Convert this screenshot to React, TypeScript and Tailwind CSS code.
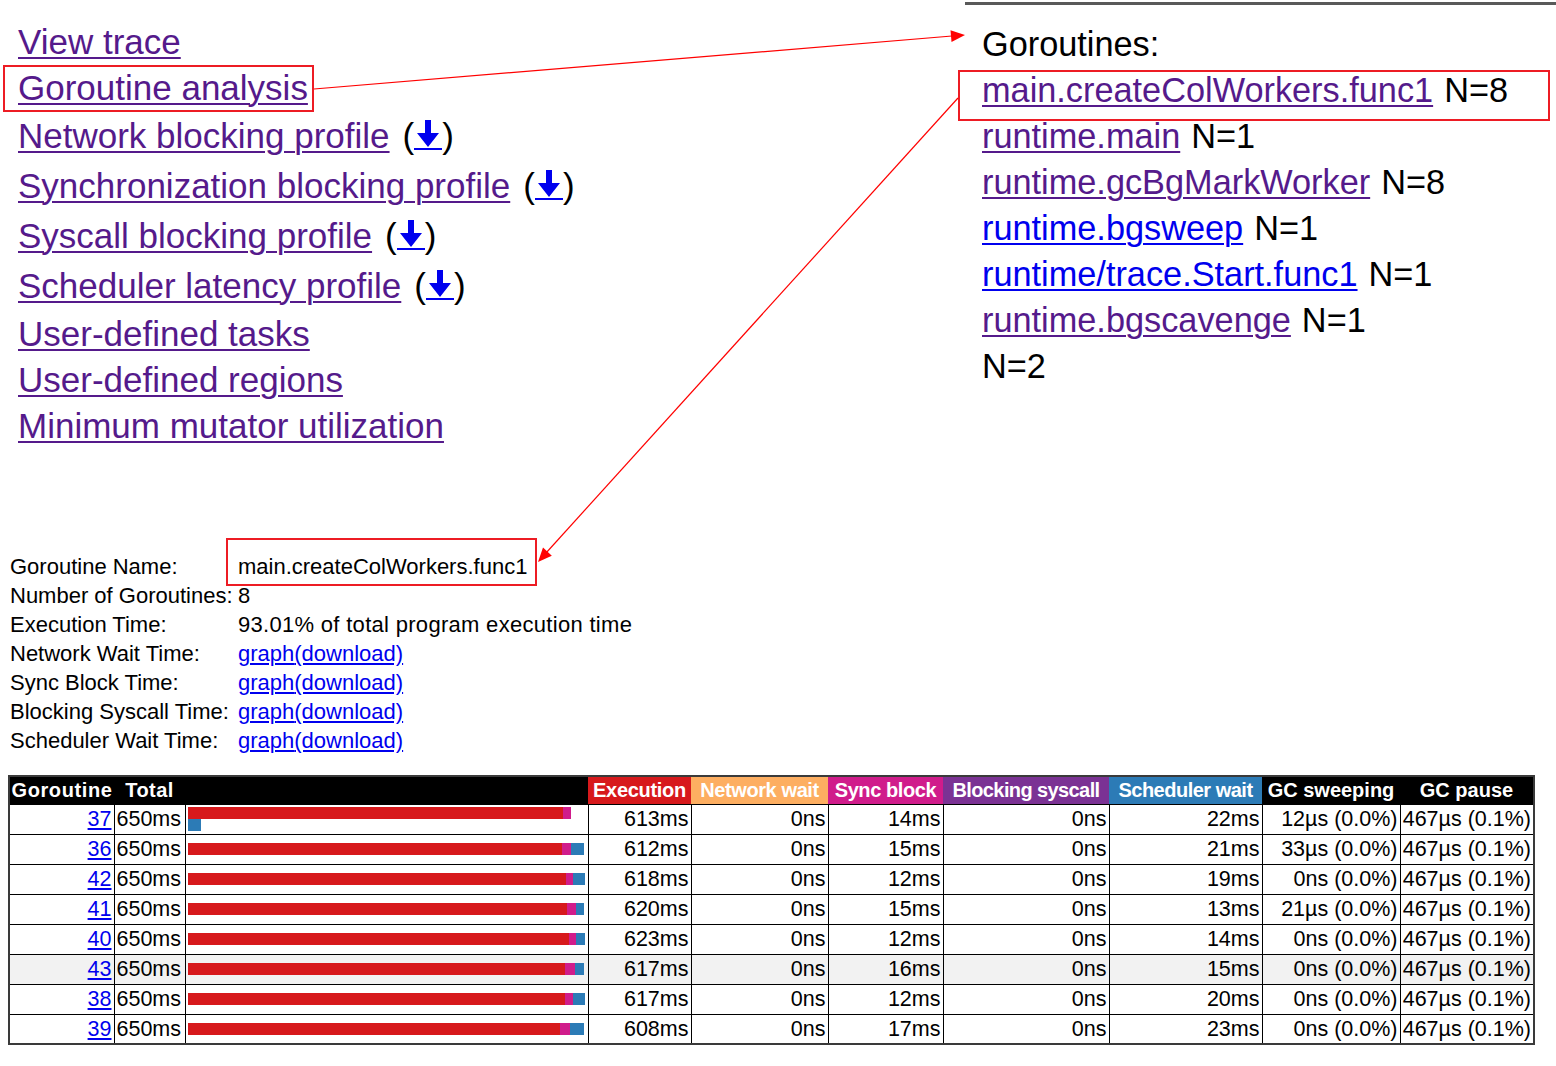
import React from 'react'

const purple = 'text-[#551a8b]'
const blue = 'text-[#0000ee]'

const Download = () => (
  <span className="ml-[13px] inline-flex items-baseline text-black">
    (
    <a href="#" className="inline-flex border-b-2 border-[#0000ee]">
      <svg width="28" height="28" viewBox="0 0 28 28">
        <path d="M11 0h6v13h8L14 27 3 13h8z" fill="#0000ee" />
      </svg>
    </a>
    )
  </span>
)

const links = [
  { label: 'View trace', dl: false },
  { label: 'Goroutine analysis', dl: false },
  { label: 'Network blocking profile', dl: true },
  { label: 'Synchronization blocking profile', dl: true },
  { label: 'Syscall blocking profile', dl: true },
  { label: 'Scheduler latency profile', dl: true },
  { label: 'User-defined tasks', dl: false },
  { label: 'User-defined regions', dl: false },
  { label: 'Minimum mutator utilization', dl: false },
]

const goroutines = [
  { name: 'main.createColWorkers.func1', n: 'N=8', visited: true },
  { name: 'runtime.main', n: 'N=1', visited: true },
  { name: 'runtime.gcBgMarkWorker', n: 'N=8', visited: true },
  { name: 'runtime.bgsweep', n: 'N=1', visited: false },
  { name: 'runtime/trace.Start.func1', n: 'N=1', visited: false },
  { name: 'runtime.bgscavenge', n: 'N=1', visited: true },
]

const rows = [
  { id: 37, exec: 613, sync: 14, sched: 22, gcs: '12µs (0.0%)', wrap: true },
  { id: 36, exec: 612, sync: 15, sched: 21, gcs: '33µs (0.0%)' },
  { id: 42, exec: 618, sync: 12, sched: 19, gcs: '0ns (0.0%)' },
  { id: 41, exec: 620, sync: 15, sched: 13, gcs: '21µs (0.0%)' },
  { id: 40, exec: 623, sync: 12, sched: 14, gcs: '0ns (0.0%)' },
  { id: 43, exec: 617, sync: 16, sched: 15, gcs: '0ns (0.0%)', hl: true },
  { id: 38, exec: 617, sync: 12, sched: 20, gcs: '0ns (0.0%)' },
  { id: 39, exec: 608, sync: 17, sched: 23, gcs: '0ns (0.0%)' },
]

const info = [
  'Goroutine Name:',
  'Number of Goroutines:',
  'Execution Time:',
  'Network Wait Time:',
  'Sync Block Time:',
  'Blocking Syscall Time:',
  'Scheduler Wait Time:',
]

const px = (ms: number) => (ms * 398) / 650

const Graph = () => (
  <span className={blue}>
    <a href="#" className="underline">graph</a>
    <a href="#" className="underline">(download)</a>
  </span>
)

const td = 'border border-black px-[2px] py-0 leading-[24px]'

export default function App() {
  return (
    <div className="relative w-[1556px] h-[1066px] bg-white text-black font-['Liberation_Sans',Arial,sans-serif]">
      <div className="flex">
        <div className="pl-[18px] pt-[19px] text-[35px]">
          {links.map((l) => (
            <div key={l.label} className={`flex items-center ${l.dl ? 'h-[50px]' : 'h-[46px]'}`}>
              <a href="#" className={`underline underline-offset-[3px] decoration-[2px] ${purple}`}>{l.label}</a>
              {l.dl && <Download />}
            </div>
          ))}
        </div>
        <div className="ml-auto mt-[2px] w-[591px] border-t-[3px] border-[#595959] pl-[17px] pt-[17px] text-[34.3px]">
          <div className="flex h-[46px] items-center">Goroutines:</div>
          {goroutines.map((g) => (
            <div key={g.name} className="flex h-[46px] items-center">
              <a href="#" className={`underline underline-offset-[3px] decoration-[2px] ${g.visited ? purple : blue}`}>{g.name}</a>
              <span className="ml-[11px]">{g.n}</span>
            </div>
          ))}
          <div className="flex h-[46px] items-center">N=2</div>
        </div>
      </div>

      <div className="mt-[103px] ml-[10px] grid w-fit grid-cols-[228px_auto] text-[22px] leading-[29px]">
        {info.map((label, i) => (
          <React.Fragment key={label}>
            <div className="h-[29px] whitespace-nowrap">{label}</div>
            <div className="h-[29px] whitespace-nowrap">
              {i === 0 && 'main.createColWorkers.func1'}
              {i === 1 && '8'}
              {i === 2 && <span className="tracking-[0.3px]">93.01% of total program execution time</span>}
              {i > 2 && <Graph />}
            </div>
          </React.Fragment>
        ))}
      </div>

      <table className="mt-[20px] ml-[8px] table-fixed border-collapse border-2 border-[#3a3a3a] text-[21.5px]">
        <colgroup>
          <col className="w-[105px]" />
          <col className="w-[71px]" />
          <col className="w-[403px]" />
          <col className="w-[103px]" />
          <col className="w-[137px]" />
          <col className="w-[115px]" />
          <col className="w-[166px]" />
          <col className="w-[153px]" />
          <col className="w-[138px]" />
          <col className="w-[134px]" />
        </colgroup>
        <thead>
          <tr className="h-[28px] bg-black text-[20px] font-bold leading-[24px] text-white">
            <th className="p-0 whitespace-nowrap tracking-[0.6px]">Goroutine</th>
            <th className="p-0 whitespace-nowrap tracking-[0.4px]">Total</th>
            <th className="p-0"></th>
            <th className="p-0 whitespace-nowrap bg-[#d7191c] tracking-[-0.3px]">Execution</th>
            <th className="p-0 whitespace-nowrap bg-[#fdae61] tracking-[-0.4px]">Network wait</th>
            <th className="p-0 whitespace-nowrap bg-[#d01c8b] tracking-[-0.4px]">Sync block</th>
            <th className="p-0 whitespace-nowrap bg-[#7b3294] tracking-[-0.6px]">Blocking syscall</th>
            <th className="p-0 whitespace-nowrap bg-[#2c7bb6] tracking-[-0.5px]">Scheduler wait</th>
            <th className="p-0 whitespace-nowrap">GC sweeping</th>
            <th className="p-0 whitespace-nowrap">GC pause</th>
          </tr>
        </thead>
        <tbody>
          {rows.map((r) => (
            <tr key={r.id} className={`h-[30px] ${r.hl ? 'bg-[#f2f2f2]' : ''}`}>
              <td className={`${td} text-right`}>
                <a href="#" className={`underline ${blue}`}>{r.id}</a>
              </td>
              <td className={`${td} text-left`}>650ms</td>
              <td className={`${td} align-middle`}>
                <div className="flex w-[398px] flex-wrap">
                  <div className="h-[12px] bg-[#d7191c]" style={{ width: px(r.exec) }} />
                  <div className="h-[12px] bg-[#d01c8b]" style={{ width: px(r.sync) }} />
                  {r.wrap && <div className="h-0 w-full" />}
                  <div className="h-[12px] bg-[#2c7bb6]" style={{ width: px(r.sched) }} />
                </div>
              </td>
              <td className={`${td} text-right`}>{r.exec}ms</td>
              <td className={`${td} text-right`}>0ns</td>
              <td className={`${td} text-right`}>{r.sync}ms</td>
              <td className={`${td} text-right`}>0ns</td>
              <td className={`${td} text-right`}>{r.sched}ms</td>
              <td className={`${td} text-right whitespace-nowrap`}>{r.gcs}</td>
              <td className={`${td} text-right whitespace-nowrap`}>467µs (0.1%)</td>
            </tr>
          ))}
        </tbody>
      </table>

      <svg className="pointer-events-none absolute left-0 top-0" width="1556" height="1066">
        <g fill="none" stroke="#ed1c24" strokeWidth="2">
          <rect x="4" y="66" width="309" height="45" />
          <rect x="959" y="71" width="590" height="49" />
          <rect x="227" y="539" width="309" height="46" />
        </g>
        <g stroke="#ff0000" strokeWidth="1.2">
          <line x1="314" y1="89" x2="952" y2="36" />
          <line x1="958" y1="98" x2="546" y2="553" />
        </g>
        <g fill="#ff0000">
          <polygon points="965,35 951.5,42.1 950.5,30.2" />
          <polygon points="538,562 551.8,555.7 543.0,547.6" />
        </g>
      </svg>
    </div>
  )
}
